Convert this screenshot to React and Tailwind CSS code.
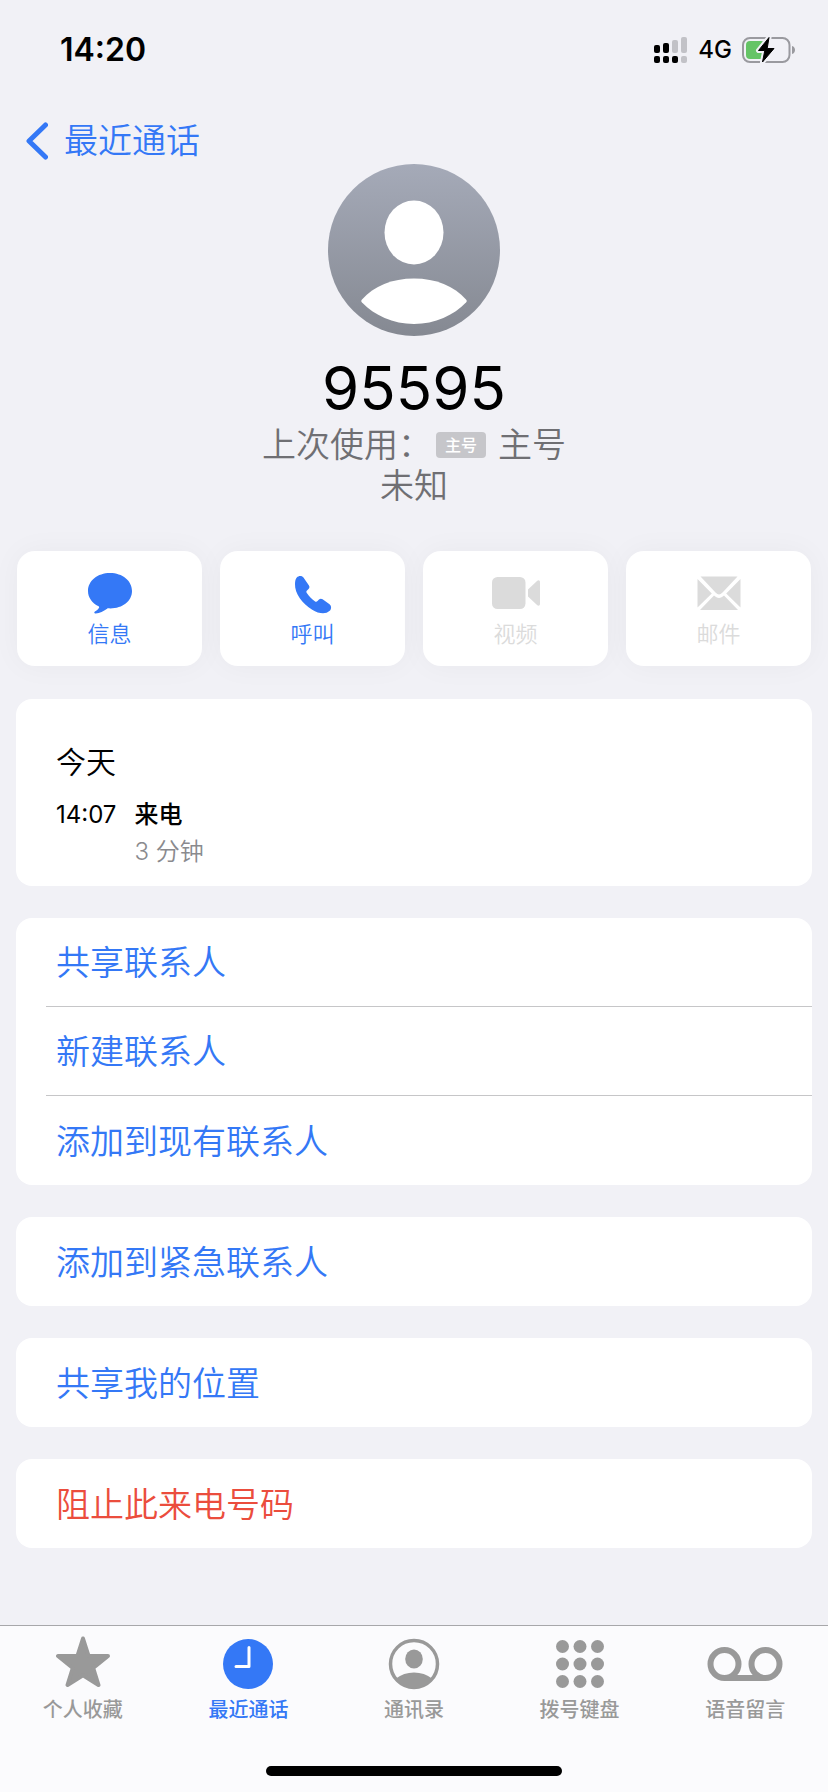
import clsx from "clsx";

const actions = [
  { label: "信息", icon: MessageIcon },
  { label: "呼叫", icon: PhoneIcon },
  { label: "视频", icon: VideoIcon, disabled: true },
  { label: "邮件", icon: MailIcon, disabled: true },
];

const groups = [
  { items: ["共享联系人", "新建联系人", "添加到现有联系人"] },
  { items: ["添加到紧急联系人"] },
  { items: ["共享我的位置"] },
  { items: ["阻止此来电号码"], danger: true },
];

const tabs = [
  { label: "个人收藏", icon: StarIcon },
  { label: "最近通话", icon: ClockIcon, active: true },
  { label: "通讯录", icon: ContactsIcon },
  { label: "拨号键盘", icon: KeypadIcon },
  { label: "语音留言", icon: VoicemailIcon },
];

function SignalIcon() {
  return (
    <svg viewBox="0 0 34 26" className="w-[34px] h-[26px]" aria-hidden="true">
      <rect x="0" y="8" width="6" height="8" rx="2" />
      <rect x="9" y="6" width="6" height="10" rx="2" />
      <rect x="18" y="3" width="6" height="13" rx="2" fill="#c2c2c7" />
      <rect x="27" y="0" width="6" height="16" rx="2" fill="#c2c2c7" />
      <rect x="0" y="19" width="6" height="7" rx="2" />
      <rect x="9" y="19" width="6" height="7" rx="2" />
      <rect x="18" y="19" width="6" height="7" rx="2" />
      <rect x="27" y="19" width="6" height="7" rx="2" fill="#c2c2c7" />
    </svg>
  );
}

function BatteryIcon() {
  const bolt = "M27 .5 16.5 13.5h6.3L20.5 25 32 11.5h-6.8Z";
  return (
    <svg viewBox="0 0 54 26" className="w-[54px] h-[26px]" aria-hidden="true">
      <rect x="1" y="1" width="46.5" height="24" rx="7" fill="none" stroke="#9a9a9f" strokeWidth="2" />
      <path d="M50 9c4 1 4 7 0 8Z" fill="#9a9a9f" />
      <rect x="4" y="4" width="19" height="18" rx="4" fill="#65c466" />
      <path d={bolt} stroke="#f1f1f6" strokeWidth="5" strokeLinejoin="round" />
      <path d={bolt} stroke="#000" strokeWidth="1" strokeLinejoin="round" />
    </svg>
  );
}

function Avatar() {
  return (
    <svg viewBox="0 0 172 172" className="w-[172px] h-[172px]" role="img" aria-label="联系人头像">
      <defs>
        <linearGradient id="avatar-bg" x1="0" y1="0" x2="0" y2="1">
          <stop offset="0" stopColor="#a5aab8" />
          <stop offset="1" stopColor="#858992" />
        </linearGradient>
      </defs>
      <circle cx="86" cy="86" r="86" fill="url(#avatar-bg)" />
      <ellipse cx="86" cy="68.5" rx="29.5" ry="32" fill="#fff" />
      <path
        d="M34 135.500C46 122 64 114.500 86 114.500s40 7.500 52 21c1 1.200 1 1.800 0 3C126 151 107 160 86 160s-40-9-52-21.500c-1-1.200-1-1.800 0-3Z"
        fill="#fff"
      />
    </svg>
  );
}

function MessageIcon() {
  return (
    <svg viewBox="0 0 48 44" className="w-12 h-11" fill="currentColor" aria-hidden="true">
      <path d="M24 1C11.500 1 2 8.800 2 19c0 6.500 4 12 10.500 15.200.8.400.8 1 .4 1.700-.9 1.600-2.300 2.400-4 3.700-1.200 1-.6 2.200.8 2 4-.4 8-2.500 11-4.700 1-.7 2-.6 3.300-.5C36.500 36.500 46 29.200 46 19S36.500 1 24 1Z" />
    </svg>
  );
}

function PhoneIcon() {
  return (
    <svg viewBox="0 0 48 44" className="w-12 h-11" fill="currentColor" aria-hidden="true">
      <path d="M7.800 5.500C9.800 3.600 13 3.400 14.800 6l5 7.200c1 1.500.8 2.700-.3 3.800l-1.500 1.500c-.8.800-.8 1.500-.2 2.500 2 3 5 6 8 8.200 1 .7 1.900.7 2.700-.1l1.500-1.500c1-1 2.300-1.200 3.600-.3l6.600 4.600c2.500 1.800 2.400 5 .5 6.900-4.200 4-11 2.900-17.500-1.100C13.500 31.800 5.600 21.500 6 12c.1-2.700.4-5.200 1.800-6.500Z" />
    </svg>
  );
}

function VideoIcon() {
  return (
    <svg viewBox="0 0 48 44" className="w-12 h-11" fill="currentColor" aria-hidden="true">
      <rect x="0" y="5" width="33.500" height="32" rx="5.500" />
      <path d="M36 17.500 45 9c1.400-1.300 3-.7 3 1.200v21.600c0 1.900-1.600 2.500-3 1.200l-9-8.500Z" />
    </svg>
  );
}

function MailIcon() {
  return (
    <svg viewBox="0 0 48 44" className="w-12 h-11" fill="currentColor" aria-hidden="true">
      <path d="M5.500 4.500h37L27.500 20.500c-2.500 2.600-4.500 2.600-7 0Z" />
      <path d="M2.500 7 16.800 21.500 2.500 35.500Z" />
      <path d="M45.500 7 31.200 21.500l14.300 14Z" />
      <path d="M19 23.500c3.300 3.300 6.700 3.300 10 0L43 38H5Z" />
    </svg>
  );
}

function StarIcon() {
  return (
    <svg viewBox="0 0 76 56" className="w-[76px] h-14" fill="currentColor" aria-hidden="true">
      <path
        d="M38 2.500 43.600 20H63L48.200 32 53.500 49 38 39.200 22.500 49l5.300-17L13 20h19.400Z"
        stroke="currentColor"
        strokeWidth="4"
        strokeLinejoin="round"
      />
    </svg>
  );
}

function ClockIcon() {
  return (
    <svg viewBox="0 0 76 56" className="w-[76px] h-14" aria-hidden="true">
      <circle cx="38" cy="28" r="25" fill="currentColor" />
      <path d="M39 11.500v19H26" fill="none" stroke="#fff" strokeWidth="3" strokeLinecap="round" strokeLinejoin="round" />
    </svg>
  );
}

function ContactsIcon() {
  return (
    <svg viewBox="0 0 76 56" className="w-[76px] h-14" fill="currentColor" aria-hidden="true">
      <circle cx="38" cy="28" r="23.500" fill="none" stroke="currentColor" strokeWidth="3.500" />
      <ellipse cx="38" cy="23" rx="8.800" ry="9.500" />
      <path d="M20 42.500C25 38.500 31 36.500 38 36.500s13 2 18 6c-4 6-10.500 10-18 10s-14-4-18-10Z" />
    </svg>
  );
}

function KeypadIcon() {
  return (
    <svg viewBox="0 0 76 56" className="w-[76px] h-14" fill="currentColor" aria-hidden="true">
      {[10.5, 28, 45.5].map((cy) =>
        [20.5, 38, 55.5].map((cx) => (
          <circle key={`${cx}-${cy}`} cx={cx} cy={cy} r="6.500" />
        ))
      )}
    </svg>
  );
}

function VoicemailIcon() {
  return (
    <svg viewBox="0 0 76 56" className="w-[76px] h-14" fill="none" stroke="currentColor" strokeWidth="6" aria-hidden="true">
      <circle cx="17.500" cy="28" r="14" />
      <circle cx="58.500" cy="28" r="14" />
      <path d="M17.500 42h41" />
    </svg>
  );
}

const StatusBar = () => (
  <div className="flex items-center justify-between h-[100px] pl-[60px] pr-8">
    <span className="text-[32px] leading-10 font-semibold">14:20</span>
    <div className="flex items-center gap-[10px]">
      <SignalIcon />
      <span className="text-2xl leading-8 font-medium">4G</span>
      <BatteryIcon />
    </div>
  </div>
);

const TabBar = () => (
  <footer className="bg-[#fbfbfd] border-t border-[#a7a7aa] pt-[10px] pb-4">
    <nav className="flex justify-around">
      {tabs.map(({ label, icon: Icon, active }) => (
        <a
          key={label}
          href="#"
          aria-current={active ? "page" : undefined}
          className={clsx(
            "flex-1 flex flex-col items-center gap-1",
            active ? "text-[#3478f6]" : "text-[#999999]"
          )}
        >
          <Icon />
          <span className="text-xl leading-7 font-medium">{label}</span>
        </a>
      ))}
    </nav>
    {/* Home indicator */}
    <div className="mt-[42px] mx-auto w-[296px] h-[10px] rounded-full bg-black" />
  </footer>
);

const App = () => {
  return (
    <div className="min-h-screen flex flex-col bg-[#f1f1f6] text-black font-[Inter,'Noto_Sans_CJK_SC',sans-serif]">
      <StatusBar />

      <header className="pt-[18px] px-6">
        <a href="#" className="flex w-fit items-center gap-4 h-[46px] text-[#3478f6]">
          <svg viewBox="0 0 24 40" className="w-6 h-10" fill="none" stroke="currentColor" strokeWidth="5" strokeLinecap="round" strokeLinejoin="round" aria-hidden="true">
            <path d="M21.500 4 5 20l16.500 16" />
          </svg>
          <span className="text-[34px] leading-10 font-[350]">最近通话</span>
        </a>
      </header>

      <main className="flex-1 px-4 pb-8">
        {/* Contact summary */}
        <section className="flex flex-col items-center">
          <Avatar />
          <h1 className="mt-4 text-6xl leading-[72px]">95595</h1>
          <p className="flex items-center text-[34px] leading-[41px] font-[350] text-[#6f6f73]">
            上次使用：
            <span className="ml-1 mr-3 w-[50px] h-[26px] rounded bg-[#c6c6ca] text-white text-base leading-[26px] font-medium text-center">
              主号
            </span>
            主号
          </p>
          <p className="text-[34px] leading-[41px] font-[350] text-[#6f6f73]">未知</p>
        </section>

        {/* Quick actions */}
        <div className="mt-[45px] px-px grid grid-cols-4 gap-[18px]">
          {actions.map(({ label, icon: Icon, disabled }) => (
            <button
              key={label}
              type="button"
              disabled={disabled}
              className={clsx(
                "flex flex-col items-center gap-1 pt-[21px] pb-[18px] rounded-[18px] bg-white shadow-[0_0_30px_rgba(0,0,0,0.04)]",
                disabled ? "text-[#dbdbdb]" : "text-[#3478f6]"
              )}
            >
              <Icon />
              <span className="text-[22px] leading-7 font-[350]">{label}</span>
            </button>
          ))}
        </div>

        {/* Call history */}
        <section className="mt-[33px] pt-[43px] pb-4 px-10 rounded-2xl bg-white">
          <h2 className="text-3xl leading-10 font-[350]">今天</h2>
          <div className="mt-[14px] flex gap-[18px] text-2xl leading-[37px]">
            <time>14:07</time>
            <div>
              <p className="font-medium">来电</p>
              <p className="font-[350] text-[#8a8a8e]">3 分钟</p>
            </div>
          </div>
        </section>

        {/* Contact options */}
        {groups.map(({ items, danger }) => (
          <ul key={items[0]} className="mt-8 pl-[30px] rounded-2xl bg-white divide-y divide-[#c6c6c8]">
            {items.map((item) => (
              <li key={item} className="h-[89px]">
                <button
                  type="button"
                  className={clsx(
                    "w-full h-full pt-0.5 pl-[10px] text-left text-[34px] leading-10 font-[350]",
                    danger ? "text-[#eb4d3d]" : "text-[#3478f6]"
                  )}
                >
                  {item}
                </button>
              </li>
            ))}
          </ul>
        ))}
      </main>

      <TabBar />
    </div>
  );
};

export default App;
